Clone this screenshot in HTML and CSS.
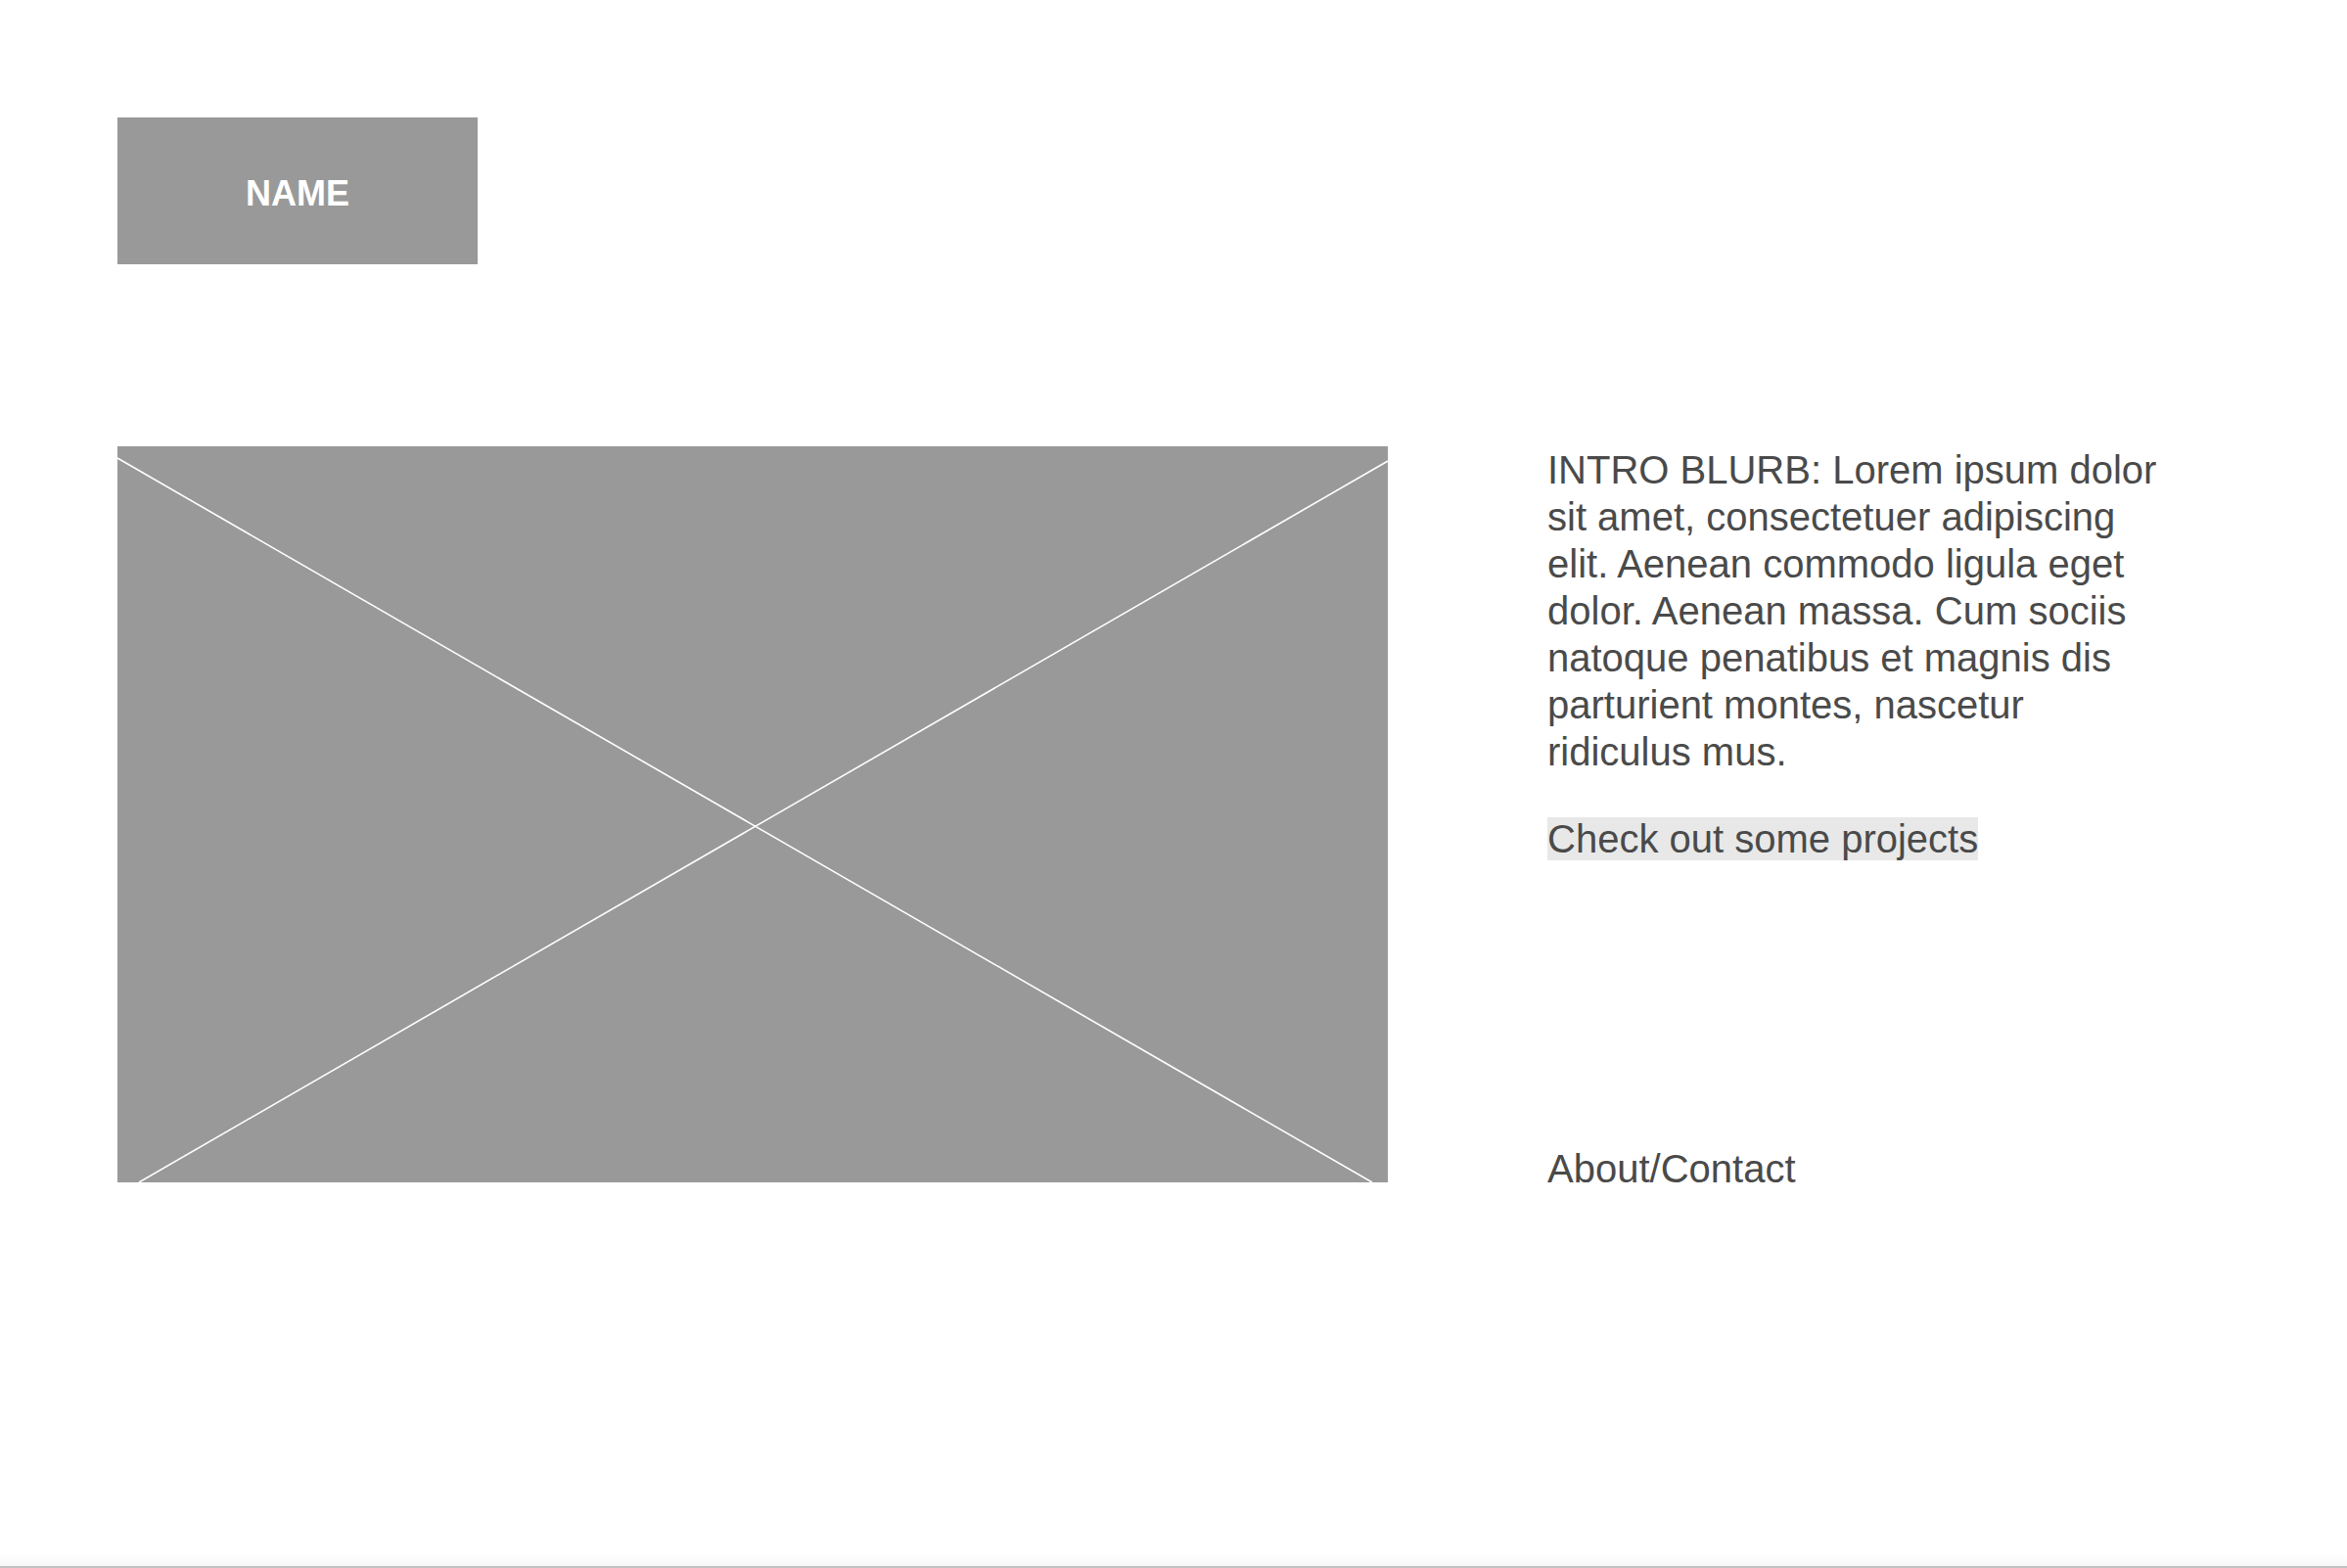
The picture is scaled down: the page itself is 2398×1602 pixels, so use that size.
FILE: index.html
```html
<!DOCTYPE html>
<html lang="en">
<head>
<meta charset="utf-8">
<title>Name</title>
<link rel="stylesheet" href="styles.css">
</head>
<body>
<div class="page">
  <header class="masthead">
    <div class="name-box">NAME</div>
  </header>
  <main class="hero">
    <div class="placeholder">
      <svg class="placeholder-x" viewBox="0 0 1298 752" width="1298" height="752" aria-hidden="true">
        <line x1="0" y1="12" x2="1282" y2="752" />
        <line x1="1298" y1="15" x2="22" y2="752" />
      </svg>
    </div>
    <aside class="side">
      <p class="blurb">INTRO BLURB: Lorem ipsum dolor sit amet, consectetuer adipiscing elit. Aenean commodo ligula eget dolor. Aenean massa. Cum sociis natoque penatibus et magnis dis parturient montes, nascetur ridiculus mus.</p>
      <p class="projects"><a class="projects-link" href="#">Check out some projects</a></p>
      <p class="about"><a class="about-link" href="#">About/Contact</a></p>
    </aside>
  </main>
</div>
</body>
</html>
```
FILE: styles.css
```css
html, body {
  margin: 0;
  padding: 0;
  background: #ffffff;
}

body {
  font-family: "Liberation Sans", Arial, Helvetica, sans-serif;
  color: #4a4a4a;
}

.page {
  box-sizing: border-box;
  height: 1602px;
  padding: 120px 0 0 120px;
  border-bottom: 2px solid #c2c2c2;
  background: linear-gradient(to bottom, #ffffff 0, #ffffff 1588px, #f7f7f7 1600px);
}

.masthead {
  display: flex;
}

.name-box {
  box-sizing: border-box;
  width: 368px;
  height: 150px;
  padding-top: 5px;
  background: #999999;
  color: #ffffff;
  font-weight: bold;
  font-size: 36px;
  display: flex;
  align-items: center;
  justify-content: center;
}

.hero {
  display: flex;
  margin-top: 186px;
  gap: 163px;
}

.placeholder {
  width: 1298px;
  height: 752px;
  background: #999999;
  flex: none;
}

.placeholder-x {
  display: block;
}

.placeholder-x line {
  stroke: #ffffff;
  stroke-width: 1.6;
}

.side {
  width: 632px;
  display: flex;
  flex-direction: column;
  font-size: 40px;
  line-height: 48px;
}

.blurb {
  margin: 0;
}

.projects {
  margin: 41px 0 0;
}

.projects-link {
  color: #4a4a4a;
  text-decoration: none;
  background: #e8e8e8;
}

.about {
  margin: auto 0 -10px;
}

.about-link {
  color: #4a4a4a;
  text-decoration: none;
}
```
